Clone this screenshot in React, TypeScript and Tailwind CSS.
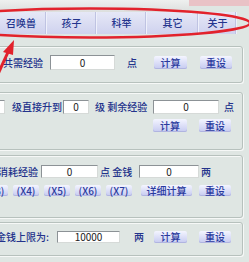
import React from "react";

const font = { fontFamily: '"Noto Sans CJK SC", "Noto Sans", sans-serif' };

function Btn({ label, w, h = 13, ml = 0 }: { label: string; w: number; h?: number; ml?: number }) {
  return (
    <div
      className="flex shrink-0 items-center justify-center rounded-[2px] bg-gradient-to-b from-[#f4f5ff] to-[#c6caf0] text-[10px] font-medium leading-none text-[#2a3a9e] shadow-[inset_0_-1px_0_#b0b4e0]"
      style={{ width: w, height: h, marginLeft: ml }}
    >
      {label}
    </div>
  );
}

function Field({ value, w, h, ml }: { value: string; w: number; h: number; ml: number }) {
  return (
    <div
      className="flex shrink-0 items-center justify-center border border-[#8c9296] border-b-[#d6dad8] border-r-[#d6dad8] bg-white text-[10px] leading-none text-[#222]"
      style={{ width: w, height: h, marginLeft: ml }}
    >
      {value}
    </div>
  );
}

function Label({ text, w, ml = 0, right = false }: { text: string; w: number; ml?: number; right?: boolean }) {
  return (
    <div
      className={`shrink-0 whitespace-nowrap text-[10px] font-medium leading-none text-[#24338c] ${right ? "flex justify-end" : ""}`}
      style={{ width: w, marginLeft: ml }}
    >
      {text}
    </div>
  );
}

function Box({ children, h, mt }: { children: React.ReactNode; h: number; mt: number }) {
  return (
    <div
      className="ml-[-6px] w-[249px] shrink-0 rounded-[3px] border border-[#b7c1bd] shadow-[inset_1px_1px_0_#f6f8f7,1px_1px_0_#f6f8f7]"
      style={{ height: h, marginTop: mt }}
    >
      {children}
    </div>
  );
}

const tabs = [
  { t: "召唤兽", w: 51 },
  { t: "孩子", w: 50 },
  { t: "科举", w: 50 },
  { t: "其它", w: 52 },
  { t: "关于", w: 38 },
];

export default function App() {
  return (
    <div className="relative h-[262px] w-[249px] overflow-hidden bg-[#dfe6e3]" style={font}>
      <div className="flex h-[12px] w-full">
        <div className="h-full flex-1 bg-gradient-to-b from-[#eef0ef] to-[#dcdfde]" />
        <div className="h-[6px] w-[60px] bg-[#e9c2c6]" />
      </div>

      <div className="flex h-[22px] ml-[-4px]">
        {tabs.map((tab) => (
          <div
            key={tab.t}
            className="flex shrink-0 items-center justify-center border-r border-[#eef0fb] bg-gradient-to-b from-[#e6e8f7] to-[#cfd2ee] text-[10px] font-medium leading-none text-[#24358e] shadow-[inset_-1px_0_0_#bfc3e2]"
            style={{ width: tab.w }}
          >
            {tab.t}
          </div>
        ))}
      </div>

      <div className="flex flex-col">
        <Box h={37} mt={12}>
          <div className="mt-[8px] flex h-[15px] items-center">
            <Label text="共需经验" w={48} right />
            <Field value="0" w={65} h={15} ml={7} />
            <Label text="点" w={12} ml={12} />
            <Btn label="计算" w={33} ml={15} />
            <Btn label="重设" w={32} ml={13} />
          </div>
        </Box>

        <Box h={58} mt={9}>
          <div className="mt-[7px] flex h-[14px] items-center">
            <Field value="" w={10} h={14} ml={0} />
            <Label text="级直接升到" w={48} ml={7} />
            <Field value="0" w={26} h={14} ml={3} />
            <Label text="级 剩余经验" w={52} ml={6} />
            <Field value="0" w={66} h={14} ml={6} />
            <Label text="点" w={12} ml={5} />
          </div>
          <div className="mt-[5px] flex h-[13px] items-center">
            <Btn label="计算" w={34} ml={158} />
            <Btn label="重设" w={32} ml={12} />
          </div>
        </Box>

        <Box h={63} mt={5}>
          <div className="mt-[9px] flex h-[13px] items-center">
            <Label text="需消耗经验" w={46} ml={-3} right />
            <Field value="0" w={57} h={13} ml={3} />
            <Label text="点 金钱" w={34} ml={2} />
            <Field value="0" w={60} h={13} ml={5} />
            <Label text="两" w={12} ml={2} />
          </div>
          <div className="mt-[7px] flex h-[11px] items-center">
            <Btn label="(X3)" w={26} h={11} ml={-13} />
            <Btn label="(X4)" w={26} h={11} ml={5} />
            <Btn label="(X5)" w={26} h={11} ml={5} />
            <Btn label="(X6)" w={26} h={11} ml={5} />
            <Btn label="(X7)" w={26} h={11} ml={5} />
            <Btn label="详细计算" w={51} h={11} ml={9} />
            <Btn label="重设" w={32} h={11} ml={7} />
          </div>
        </Box>

        <Box h={34} mt={4}>
          <div className="mt-[8px] flex h-[12px] items-center">
            <Label text="金钱上限为:" w={54} right />
            <Field value="10000" w={63} h={12} ml={8} />
            <Label text="两" w={12} ml={14} />
            <Btn label="计算" w={33} h={12} ml={8} />
            <Btn label="重设" w={32} h={12} ml={12} />
          </div>
        </Box>
      </div>

      <svg className="pointer-events-none absolute left-0 top-0" width="249" height="262" viewBox="0 0 249 262">
        <ellipse cx="90" cy="23" rx="160" ry="14.5" fill="none" stroke="#e2222c" strokeWidth="2.5" />
        <line x1="-2" y1="74" x2="9" y2="50" stroke="#e2222c" strokeWidth="3" />
        <polygon points="14,40 3,52 13,55" fill="#e2222c" />
      </svg>
    </div>
  );
}
